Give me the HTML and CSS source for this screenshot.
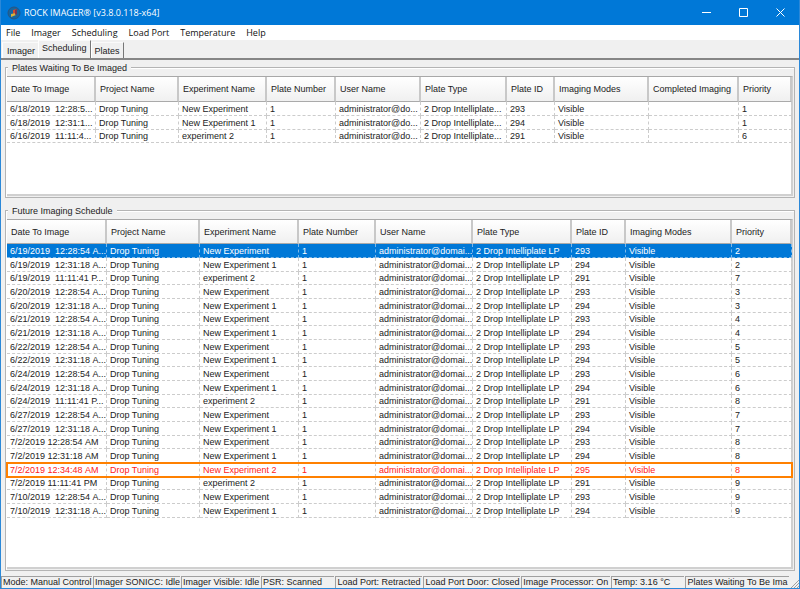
FILE: index.html
```
<!DOCTYPE html>
<html lang="en">
<head>
  <meta charset="UTF-8">
  <title>ROCK IMAGER</title>
  <link rel="stylesheet" href="styles.css">
</head>
<body>

<div class="window">
  <header class="titlebar">
    <svg class="logo" viewBox="0 0 14 14" width="14" height="14">
      <circle cx="7" cy="7" r="6" fill="#17669f" stroke="#275583" stroke-width="1"/>
      <path d="M6 4l4-1v4l-4 1z" fill="#d34a2c"/>
      <path d="M4 8l5-1v2l-5 2z" fill="#d9b23c"/>
      <path d="M8 4l2-1v5l-2 1z" fill="#7b3550"/>
    </svg>
    <h1 class="title">ROCK IMAGER® [v3.8.0.118-x64]</h1>
    <div class="window-buttons">
      <button aria-label="Minimize"><svg viewBox="0 0 9 9" width="9" height="9"><path d="M0 4.5h9"/></svg></button>
      <button aria-label="Maximize"><svg viewBox="0 0 9 9" width="9" height="9"><path d="M.5 .5h8v8h-8z"/></svg></button>
      <button aria-label="Close"><svg viewBox="0 0 9 9" width="9" height="9"><path d="M.5 .5l8 8M8.5 .5l-8 8"/></svg></button>
    </div>
  </header>

  <nav class="menu">
    <button>File</button>
    <button>Imager</button>
    <button>Scheduling</button>
    <button>Load Port</button>
    <button>Temperature</button>
    <button>Help</button>
  </nav>

  <div class="tabs" role="tablist">
    <button class="tab" role="tab">Imager</button>
    <button class="tab active" role="tab" aria-selected="true">Scheduling</button>
    <button class="tab" role="tab">Plates</button>
  </div>

  <main class="page">
    <section class="group waiting">
      <h2 class="group-title">Plates Waiting To Be Imaged</h2>
      <div class="list">
        <table>
          <colgroup>
            <col class="w89"><col class="w83"><col class="w88"><col class="w69"><col class="w85">
            <col class="w86"><col class="w48"><col class="w94"><col class="w90"><col class="w53">
          </colgroup>
          <thead>
            <tr>
              <th>Date To Image</th><th>Project Name</th><th>Experiment Name</th><th>Plate Number</th><th>User Name</th>
              <th>Plate Type</th><th>Plate ID</th><th>Imaging Modes</th><th>Completed Imaging</th><th>Priority</th>
            </tr>
          </thead>
          <tbody id="waiting-rows"></tbody>
        </table>
      </div>
    </section>

    <section class="group future">
      <h2 class="group-title">Future Imaging Schedule</h2>
      <div class="list">
        <table>
          <colgroup>
            <col class="w100"><col class="w93"><col class="w99"><col class="w77"><col class="w97">
            <col class="w99"><col class="w54"><col class="w106"><col class="w60">
          </colgroup>
          <thead>
            <tr>
              <th>Date To Image</th><th>Project Name</th><th>Experiment Name</th><th>Plate Number</th><th>User Name</th>
              <th>Plate Type</th><th>Plate ID</th><th>Imaging Modes</th><th>Priority</th>
            </tr>
          </thead>
          <tbody id="future-rows"></tbody>
        </table>
      </div>
    </section>
  </main>

  <footer class="status">
    <span class="panel p91">Mode: Manual Control</span>
    <span class="panel p87">Imager SONICC: Idle</span>
    <span class="panel p79">Imager Visible: Idle</span>
    <span class="panel p73">PSR: Scanned</span>
    <span class="panel p87">Load Port: Retracted</span>
    <span class="panel p97">Load Port Door: Closed</span>
    <span class="panel p89">Image Processor: On</span>
    <span class="panel p73">Temp: 3.16 °C</span>
    <span class="panel p104">Plates Waiting To Be Ima</span>
    <svg class="grip" viewBox="0 0 9 9" width="9" height="9"><path d="M1 9l8-8M4 9l5-5M7 9l2-2"/></svg>
  </footer>
</div>

<script src="script.js"></script>
</body>
</html>
```
FILE: styles.css
```
* {
  box-sizing: border-box;
}
body {
  margin: 0;
  font-family: "Liberation Sans", Arial, sans-serif;
  font-size: 9px;
  line-height: 12px;
  color: #222;
}
button {
  font: inherit;
  color: inherit;
  background: none;
  border: none;
  margin: 0;
  padding: 0;
}
.window {
  min-height: 100vh;
  display: flex;
  flex-direction: column;
  background: #f0f0f0;
  border: 1px solid #2b88d8;
  border-top: none;
}

/* title bar */
.titlebar {
  height: 25px;
  display: flex;
  align-items: center;
  padding-left: 6px;
  background: #0078d7;
  color: #fff;
}
.title {
  flex: 1;
  margin: 0 0 0 3px;
  font: 9px/14px "Open Sans", "Noto Sans", sans-serif;
}
.window-buttons {
  display: flex;
}
.window-buttons button {
  width: 37px;
  height: 25px;
  display: flex;
  align-items: center;
  justify-content: center;
}
.window-buttons path {
  fill: none;
  stroke: #fff;
}

/* menu and tabs */
.menu {
  height: 15px;
  display: flex;
  gap: 11px;
  padding-left: 5px;
  background: #fff;
  font: 9px/15px "Open Sans", "Noto Sans", sans-serif;
  color: #111;
}
.tabs {
  height: 20px;
  display: flex;
  align-items: flex-end;
  padding-left: 1px;
  border-bottom: 2px solid #868686;
}
.tab {
  height: 16px;
  padding: 0 3px;
  border-left: 1px solid #fff;
  border-top: 1px solid #fafafa;
  border-right: 1px solid #777;
}
.tab:first-child {
  padding-left: 4px;
  border-right: none;
}
.tab.active {
  height: 18px;
  padding-bottom: 4px;
}

/* group boxes */
.page {
  flex: 1;
  display: flex;
  flex-direction: column;
  gap: 12px;
  padding: 7px 4px 5px;
}
.group {
  display: flex;
  flex-direction: column;
  border: 1px solid #b4b4b4;
  box-shadow: inset 1px 1px #fff;
  padding: 0 1px 1px;
}
.waiting {
  flex: 130 1 0;
}
.future {
  flex: 363 1 0;
}
.group-title {
  align-self: flex-start;
  margin: -6px 0 2px 1px;
  padding: 0 4px;
  font-size: 9px;
  font-weight: normal;
  background: #f0f0f0;
}
.list {
  flex: 1;
  background: #fff;
  border-top: 1px solid #a8a8a8;
  border-right: 2px solid #d0d0d0;
  border-bottom: 2px solid #d0d0d0;
}

/* tables */
table {
  width: 100%;
  table-layout: fixed;
  border-collapse: separate;
  border-spacing: 0;
}
.w48 { width: 48px; }
.w53 { width: 53px; }
.w54 { width: 54px; }
.w60 { width: 60px; }
.w69 { width: 69px; }
.w77 { width: 77px; }
.w83 { width: 83px; }
.w85 { width: 85px; }
.w86 { width: 86px; }
.w88 { width: 88px; }
.w89 { width: 89px; }
.w90 { width: 90px; }
.w93 { width: 93px; }
.w94 { width: 94px; }
.w97 { width: 97px; }
.w99 { width: 99px; }
.w100 { width: 100px; }
.w106 { width: 106px; }
th {
  height: 25px;
  padding: 0 0 0 4px;
  font-weight: normal;
  text-align: left;
  white-space: nowrap;
  background: linear-gradient(#fff, #f0f0f0);
  border-right: 2px solid #c8c8c8;
  border-bottom: 1px solid #aaa;
}
.future th {
  height: 24px;
}
td {
  height: 14px;
  padding: 0 0 0 3px;
  line-height: 12px;
  white-space: nowrap;
  border-right: 1px dashed #ccc;
  border-bottom: 1px dashed #ccc;
}
tr:nth-child(3n) td {
  height: 13px;
}
.selected td {
  color: #fff;
  background: #0078d7;
  border-color: #7fb8e8;
}
.overdue {
  color: #ff2020;
  outline: 2px solid #ff8000;
  outline-offset: -1px;
}

/* status bar */
.status {
  height: 12px;
  display: flex;
  gap: 1px;
}
.panel {
  min-width: 0;
  overflow: hidden;
  padding-left: 1px;
  white-space: nowrap;
  line-height: 11px;
  border-top: 1px solid #a0a0a0;
  border-left: 1px solid #a0a0a0;
}
.p73 { flex: 73 1 0; }
.p79 { flex: 79 1 0; }
.p87 { flex: 87 1 0; }
.p89 { flex: 89 1 0; }
.p91 { flex: 91 1 0; }
.p97 { flex: 97 1 0; }
.p104 { flex: 104 1 0; }
.grip {
  align-self: flex-end;
}
.grip path {
  fill: none;
  stroke: #a0a0a0;
}
```
FILE: script.js
```
const waiting = [
  ['6/18/2019  12:28:5...', 'New Experiment', 293, 1],
  ['6/18/2019  12:31:1...', 'New Experiment 1', 294, 1],
  ['6/16/2019  11:11:4...', 'experiment 2', 291, 6]
];

const future = [
  ['6/19/2019  12:28:54 A...', 'New Experiment', 293, 2, 'selected'],
  ['6/19/2019  12:31:18 A...', 'New Experiment 1', 294, 2],
  ['6/19/2019  11:11:41 P...', 'experiment 2', 291, 7],
  ['6/20/2019  12:28:54 A...', 'New Experiment', 293, 3],
  ['6/20/2019  12:31:18 A...', 'New Experiment 1', 294, 3],
  ['6/21/2019  12:28:54 A...', 'New Experiment', 293, 4],
  ['6/21/2019  12:31:18 A...', 'New Experiment 1', 294, 4],
  ['6/22/2019  12:28:54 A...', 'New Experiment', 293, 5],
  ['6/22/2019  12:31:18 A...', 'New Experiment 1', 294, 5],
  ['6/24/2019  12:28:54 A...', 'New Experiment', 293, 6],
  ['6/24/2019  12:31:18 A...', 'New Experiment 1', 294, 6],
  ['6/24/2019  11:11:41 P...', 'experiment 2', 291, 8],
  ['6/27/2019  12:28:54 A...', 'New Experiment', 293, 7],
  ['6/27/2019  12:31:18 A...', 'New Experiment 1', 294, 7],
  ['7/2/2019 12:28:54 AM', 'New Experiment', 293, 8],
  ['7/2/2019 12:31:18 AM', 'New Experiment 1', 294, 8],
  ['7/2/2019 12:34:48 AM', 'New Experiment 2', 295, 8, 'overdue'],
  ['7/2/2019 11:11:41 PM', 'experiment 2', 291, 9],
  ['7/10/2019  12:28:54 A...', 'New Experiment', 293, 9],
  ['7/10/2019  12:31:18 A...', 'New Experiment 1', 294, 9]
];

function addRow(body, cells, className) {
  const row = body.insertRow();
  if (className) row.className = className;
  cells.forEach(text => {
    row.insertCell().textContent = text;
  });
}

const waitingBody = document.getElementById('waiting-rows');
waiting.forEach(([date, experiment, id, priority]) => {
  addRow(waitingBody, [date.replace(/ /g, '\u00a0'), 'Drop Tuning', experiment, 1,
    'administrator@do...', '2 Drop Intelliplate...', id, 'Visible', '', priority]);
});

const futureBody = document.getElementById('future-rows');
future.forEach(([date, experiment, id, priority, className]) => {
  addRow(futureBody, [date.replace(/ /g, '\u00a0'), 'Drop Tuning', experiment, 1,
    'administrator@domai...', '2 Drop Intelliplate LP', id, 'Visible', priority], className);
});
```
